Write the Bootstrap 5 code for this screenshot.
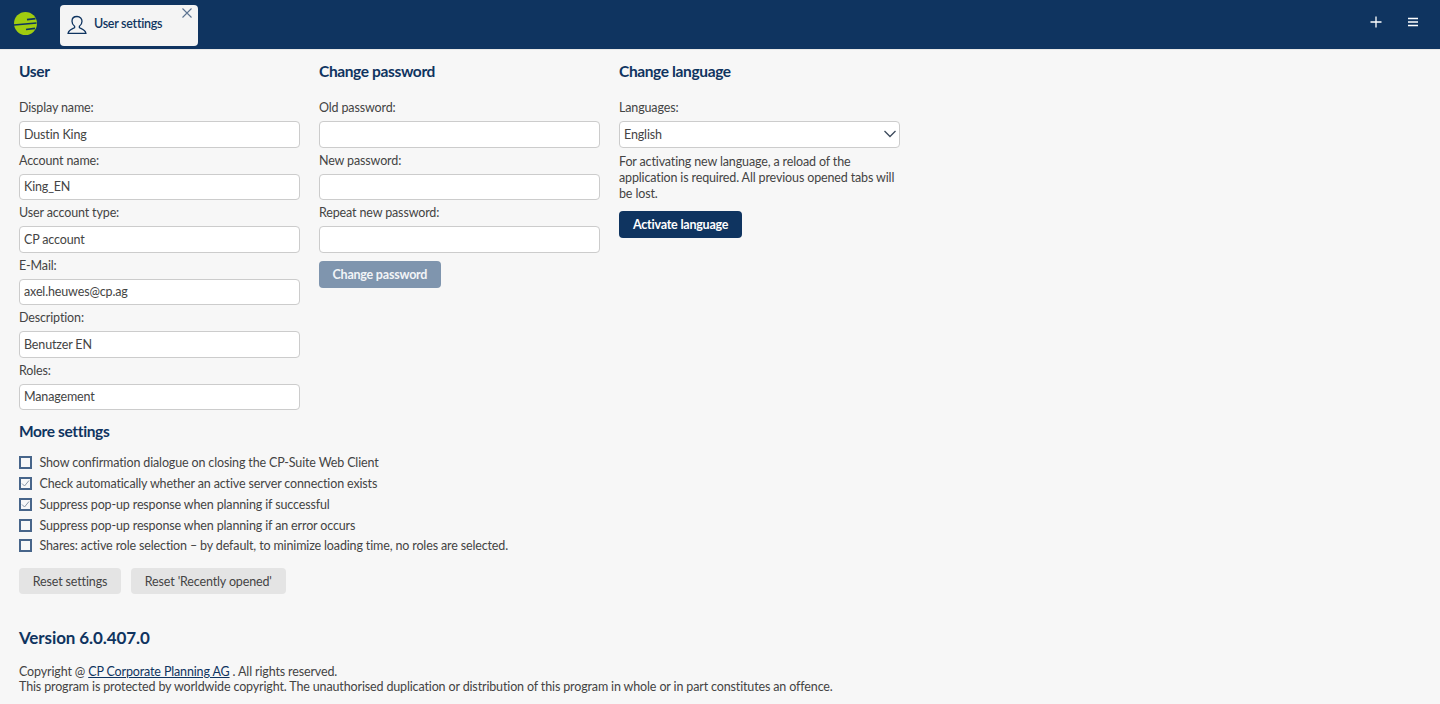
<!DOCTYPE html>
<html lang="en">
<head>
<meta charset="utf-8">
<title>User settings</title>
<link rel="stylesheet" href="https://cdn.jsdelivr.net/npm/bootstrap@5.3.0/dist/css/bootstrap.min.css">
<style>
html,body{height:100%}
body{background:#f7f7f7;font-family:Lato,"Liberation Sans",sans-serif;font-size:12.5px;line-height:17px;letter-spacing:-.14px;color:#444;overflow:hidden}
.topbar{height:50px;background:#0f3460;border-bottom:1px solid #e8e8e8;padding:5px 21.5px 0 13px}
.logo-mark{width:25px;height:25px;margin-top:6px;margin-right:22px}
.tab-item{width:138px;height:41px;background:#f4f4f4;border-radius:4px;color:#0f3460;font-weight:600;padding:0 0 0 7px;gap:7px;letter-spacing:-.28px}
.tab-item span{margin-bottom:4px}
.tab-item .tab-user{margin-bottom:2px}
.tab-close{position:absolute;top:2px;right:5px;width:12px;height:12px}
.top-icon{width:12px;height:12px}
.top-tools{gap:25px;height:34px}
.content-area{padding:0 19px}
.col-block{width:281px;margin-right:19px}
.sect-title{font-size:15.5px;line-height:20px;font-weight:700;color:#0f3460;margin:0;padding-top:11px;height:49px;letter-spacing:-.37px}
.fld{height:52.5px}
.fld label{display:block;height:22px;line-height:17px;margin:0}
.fld .form-control,.fld .form-select{height:26.5px;min-height:0;font-size:12.5px;line-height:17px;letter-spacing:-.14px;padding:3px 4px;color:#444;border:1px solid #ccc;border-radius:4px;background-color:#fff;font-family:inherit}
.fld .form-select{background-image:none;padding-right:24px}
.select-wrap{position:relative}
.chev{position:absolute;right:4px;top:9px;width:12px;height:8px;pointer-events:none}
.lang-note{margin:2px 0 9.5px;line-height:16px}
.act-btn{font-size:12.5px;line-height:17px;font-weight:700;height:26.5px;padding:4px 13.5px;border-radius:4px;border:0;letter-spacing:-.22px}
.act-primary,.act-primary:hover{background:#0f3460;color:#fff;padding:4px 14px}
.act-disabled,.act-disabled:disabled{background:#7f95ae;color:#f2f4f7;opacity:1;margin-top:4.5px}
.act-gray,.act-gray:hover{background:#e4e4e4;color:#444;font-weight:400;padding:4px 13.75px;letter-spacing:-.14px}
.more-title{padding-top:7px;height:38.5px}
.chk-row{height:20.75px;gap:7.5px}
.chk-box{width:13px;height:13px;border:2px solid #47658a;flex:none;background:#f8f8f8;display:flex;align-items:center;justify-content:center}
.chk-box svg{width:9px;height:9px}
.reset-row{gap:10px;margin-top:11.5px}
.version-title{font-size:17px;line-height:22px;font-weight:700;color:#0f3460;margin:33px 0 0;letter-spacing:-.1px}
.copy-text{line-height:15px;margin-top:15px}
.copy-text a{color:#0f3460}
</style>
</head>
<body>
<div class="topbar d-flex align-items-start">
  <svg class="logo-mark" viewBox="0 0 25 25" aria-hidden="true">
    <circle cx="12.5" cy="12.5" r="11.5" fill="#a0cc10"/>
    <path d="M14 8.700 L22.500 7.700 M1 14 L23.500 12 M13 18.500 L22 17.300" stroke="#0f3460" stroke-width="1.700" fill="none"/>
  </svg>
  <div class="tab-item position-relative d-flex align-items-center">
    <svg class="tab-user" width="20" height="20" viewBox="0 0 20 20" fill="none" stroke="#0f3460" stroke-width="1.300" aria-hidden="true">
      <path d="M10 1.500c-3.200 0-5 2.200-5 4.800 0 2.200 1.100 4 2.600 5v1.400c-1.600 1-5.900 1.800-6.500 5.600h17.800c-.6-3.800-4.900-4.600-6.500-5.600v-1.400c1.500-1 2.600-2.800 2.600-5 0-2.600-1.800-4.800-5-4.800z"/>
    </svg>
    <span>User settings</span>
    <svg class="tab-close" viewBox="0 0 12 12" stroke="#5c7391" stroke-width="1.100" fill="none" aria-hidden="true"><path d="M1.500 1.500l9 9M10.500 1.500l-9 9"/></svg>
  </div>
  <div class="top-tools ms-auto d-flex align-items-center">
    <svg class="top-icon" viewBox="0 0 12 12" stroke="#fff" stroke-width="1.300" aria-hidden="true"><path d="M0.500 6h11M6 0.500v11"/></svg>
    <svg class="top-icon" viewBox="0 0 12 12" stroke="#fff" stroke-width="1.400" aria-hidden="true"><path d="M1 2.500h10M1 6h10M1 9.500h10"/></svg>
  </div>
</div>
<main class="content-area">
  <div class="d-flex">
    <section class="col-block">
      <h2 class="sect-title">User</h2>
      <div class="fld"><label>Display name:</label><input class="form-control" value="Dustin King"></div>
      <div class="fld"><label>Account name:</label><input class="form-control" value="King_EN"></div>
      <div class="fld"><label>User account type:</label><input class="form-control" value="CP account"></div>
      <div class="fld"><label>E-Mail:</label><input class="form-control" value="axel.heuwes@cp.ag"></div>
      <div class="fld"><label>Description:</label><input class="form-control" value="Benutzer EN"></div>
      <div class="fld"><label>Roles:</label><input class="form-control" value="Management"></div>
    </section>
    <section class="col-block">
      <h2 class="sect-title">Change password</h2>
      <div class="fld"><label>Old password:</label><input class="form-control" type="password"></div>
      <div class="fld"><label>New password:</label><input class="form-control" type="password"></div>
      <div class="fld"><label>Repeat new password:</label><input class="form-control" type="password"></div>
      <button class="btn act-btn act-disabled" disabled>Change password</button>
    </section>
    <section class="col-block">
      <h2 class="sect-title">Change language</h2>
      <div class="fld"><label>Languages:</label>
        <div class="select-wrap"><select class="form-select"><option>English</option></select>
        <svg class="chev" viewBox="0 0 12 8" fill="none" stroke="#3c4a5c" stroke-width="1.300" aria-hidden="true"><path d="M.5 1l5.500 5.500L11.500 1"/></svg></div>
      </div>
      <p class="lang-note">For activating new language, a reload of the application is required. All previous opened tabs will be lost.</p>
      <button class="btn act-btn act-primary">Activate language</button>
    </section>
  </div>
  <h2 class="sect-title more-title">More settings</h2>
  <div class="chk-row d-flex align-items-center"><span class="chk-box"></span><span>Show confirmation dialogue on closing the CP-Suite Web Client</span></div>
  <div class="chk-row d-flex align-items-center"><span class="chk-box"><svg viewBox="0 0 9 9" fill="none" stroke="#8a98a8" stroke-width="1"><path d="M1 4.500l2.500 2.500L8 1.500"/></svg></span><span>Check automatically whether an active server connection exists</span></div>
  <div class="chk-row d-flex align-items-center"><span class="chk-box"><svg viewBox="0 0 9 9" fill="none" stroke="#8a98a8" stroke-width="1"><path d="M1 4.500l2.500 2.500L8 1.500"/></svg></span><span>Suppress pop-up response when planning if successful</span></div>
  <div class="chk-row d-flex align-items-center"><span class="chk-box"></span><span>Suppress pop-up response when planning if an error occurs</span></div>
  <div class="chk-row d-flex align-items-center"><span class="chk-box"></span><span>Shares: active role selection – by default, to minimize loading time, no roles are selected.</span></div>
  <div class="reset-row d-flex">
    <button class="btn act-btn act-gray">Reset settings</button>
    <button class="btn act-btn act-gray">Reset 'Recently opened'</button>
  </div>
  <h2 class="version-title">Version 6.0.407.0</h2>
  <div class="copy-text">Copyright @ <a href="#">CP Corporate Planning AG</a> . All rights reserved.<br>This program is protected by worldwide copyright. The unauthorised duplication or distribution of this program in whole or in part constitutes an offence.</div>
</main>
<script src="https://cdn.jsdelivr.net/npm/bootstrap@5.3.0/dist/js/bootstrap.bundle.min.js"></script>
</body>
</html>
